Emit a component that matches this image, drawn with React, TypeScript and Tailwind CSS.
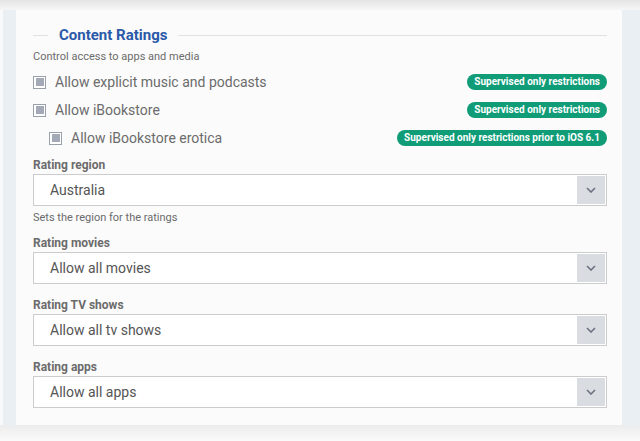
import React from "react";

const font = { fontFamily: "Roboto, 'Noto Sans', sans-serif" };

function Checkbox() {
  return (
    <span className="flex h-[13px] w-[13px] shrink-0 items-center justify-center border border-[#9aa0aa] bg-white">
      <span className="h-[8px] w-[8px] bg-[#a3a9b6]" />
    </span>
  );
}

function Badge({ children }: { children: React.ReactNode }) {
  return (
    <span className="flex h-[16px] items-center rounded-full bg-[#0f9c77] px-[7px] text-[10px] font-bold leading-none text-white">
      {children}
    </span>
  );
}

function CheckRow({ label, badge, indent }: { label: string; badge: string; indent?: boolean }) {
  return (
    <div className="flex h-[28px] items-center justify-between">
      <div className={`flex items-center gap-[9px] ${indent ? "pl-[16px]" : ""}`}>
        <Checkbox />
        <span className="text-[14px] text-[#6b6b6b]">{label}</span>
      </div>
      <Badge>{badge}</Badge>
    </div>
  );
}

function Select({ value }: { value: string }) {
  return (
    <div className="flex h-[32px] items-center justify-between border border-[#cccccc] bg-white pl-[16px] pr-[1px]">
      <span className="text-[14px] text-[#555555]">{value}</span>
      <span className="flex h-[28px] w-[28px] items-center justify-center bg-[#d9dde2]">
        <svg width="10" height="6" viewBox="0 0 10 6" fill="none">
          <path d="M1 1l4 4 4-4" stroke="#6c7280" strokeWidth="1.6" />
        </svg>
      </span>
    </div>
  );
}

function Label({ children, className }: { children: React.ReactNode; className?: string }) {
  return <div className={`text-[12px] font-bold leading-[16px] text-[#6b6b6b] ${className ?? ""}`}>{children}</div>;
}

export default function App() {
  return (
    <div className="flex h-[441px] w-[640px] flex-col overflow-hidden bg-white" style={font}>
      <div className="h-[10px] bg-gradient-to-b from-[#e4e4e4] to-[#f6f6f6]" />
      <div className="flex flex-1">
        <div className="flex w-[16px]">
          <div className="w-[3px] bg-[#f7f9fb]" />
          <div className="flex-1 bg-[#eaeff4]" />
        </div>
        <div className="flex flex-1 flex-col bg-[#fbfbfb] pl-[17px] pr-[15px] pt-[15px]">
          <div className="flex h-[20px] items-center">
            <div className="h-px w-[15px] bg-[#e2e2e2]" />
            <div className="px-[11px] text-[15px] font-bold text-[#2a5aa9]">Content Ratings</div>
            <div className="h-px flex-1 bg-[#e2e2e2]" />
          </div>
          <div className="mt-[5px] text-[11px] leading-[14px] text-[#6b6b6b]">Control access to apps and media</div>
          <div className="mt-[4px]">
            <CheckRow label="Allow explicit music and podcasts" badge="Supervised only restrictions" />
            <CheckRow label="Allow iBookstore" badge="Supervised only restrictions" />
            <CheckRow label="Allow iBookstore erotica" badge="Supervised only restrictions prior to iOS 6.1" indent />
          </div>
          <Label className="mt-[5px]">Rating region</Label>
          <div className="mt-[1px]">
            <Select value="Australia" />
          </div>
          <div className="mt-[5px] text-[11px] leading-[14px] text-[#6b6b6b]">Sets the region for the ratings</div>
          <Label className="mt-[10px]">Rating movies</Label>
          <div className="mt-[1px]">
            <Select value="Allow all movies" />
          </div>
          <Label className="mt-[13px]">Rating TV shows</Label>
          <div className="mt-[1px]">
            <Select value="Allow all tv shows" />
          </div>
          <Label className="mt-[13px]">Rating apps</Label>
          <div className="mt-[1px]">
            <Select value="Allow all apps" />
          </div>
        </div>
        <div className="w-[18px] bg-[#eaeff4]" />
      </div>
      <div className="h-[16px] bg-gradient-to-b from-[#ececec] to-[#fafafa]" />
    </div>
  );
}
